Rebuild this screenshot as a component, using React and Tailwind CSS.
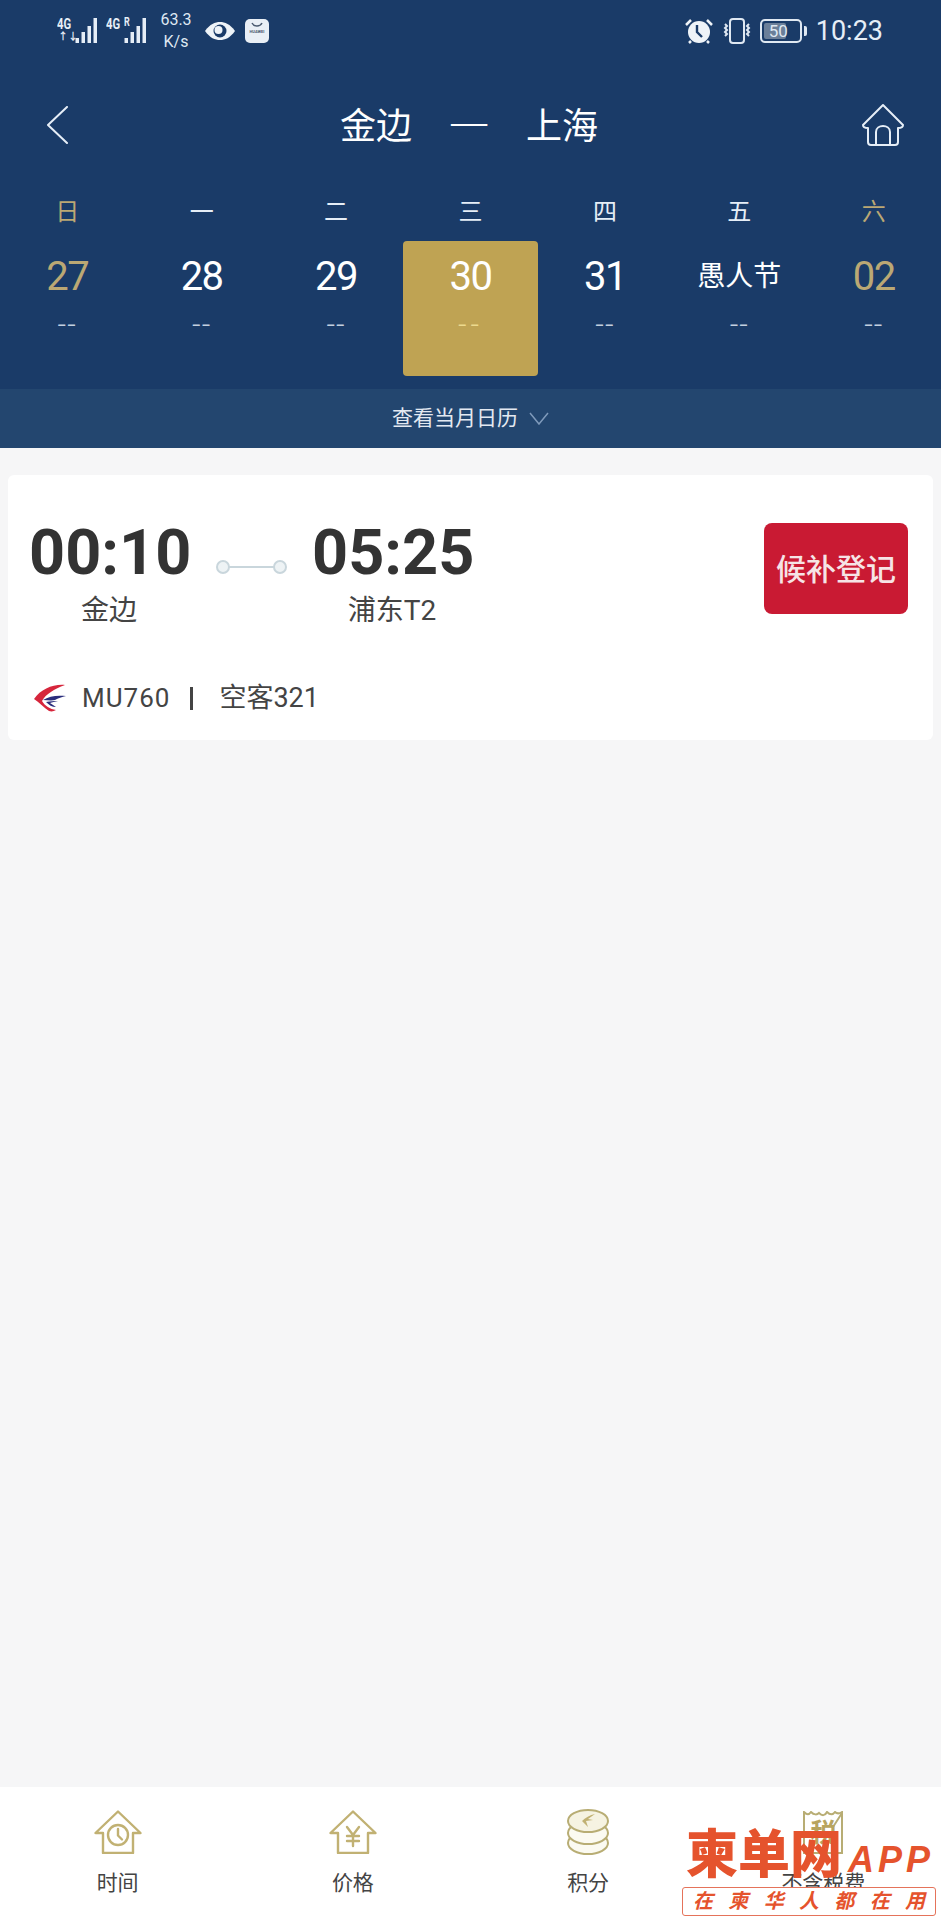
const CJK = { fontFamily: 'Roboto, "Noto Sans CJK SC", sans-serif' };

const days = [
  { w: '日', d: '27', gold: true },
  { w: '一', d: '28' },
  { w: '二', d: '29' },
  { w: '三', d: '30', sel: true },
  { w: '四', d: '31' },
  { w: '五', d: '愚人节', text: true },
  { w: '六', d: '02', gold: true },
];

function Signal({ label, r, arrows }) {
  const bars = [
    { x: 20, h: 5 },
    { x: 26, h: 11 },
    { x: 32, h: 17 },
    { x: 38, h: 25 },
  ];
  return (
    <div className="relative h-[25px] w-[41px] shrink-0">
      <span className="absolute left-0 top-[-2px] origin-left scale-x-75 text-[15px] font-bold leading-[16px] text-[#e6eef7]">{label}</span>
      {r && <span className="absolute left-[18px] top-[-3px] origin-left scale-x-75 text-[12px] font-bold leading-[14px] text-[#e6eef7]">R</span>}
      {arrows && <span className="absolute left-[1px] top-[13px] text-[10px] font-bold leading-[12px] text-[#e6eef7]">↑↓</span>}
      <svg className="absolute left-0 top-0" width="41" height="25" viewBox="0 0 41 25">
        {bars.map((b) => (
          <rect key={b.x} x={b.x - 1.5} y={25 - b.h} width="3.5" height={b.h} fill="#e6eef7" />
        ))}
      </svg>
    </div>
  );
}

function Logo() {
  return (
    <svg width="34" height="28" viewBox="0 0 34 28" className="shrink-0">
      <path d="M32 1C20 0 8 5 1 15c5 3 10 9 15 12 3 1 5 0 7-1-6-1-11-4-14-9C13 10 21 5 32 1Z" fill="#d6263c" />
      <path d="M33 12c-9-1-17 0-23 4 4 0 8 1 12 0 3-2 7-3 11-4Z" fill="#2a2d7c" />
      <path d="M13 18c4-1 8-1 12-1-3 1-6 1-8 2l6 4c-4 0-7-2-10-5Z" fill="#2a2d7c" />
    </svg>
  );
}

function HouseBase({ children }) {
  return (
    <svg width="48" height="44" viewBox="0 0 48 44" fill="none" stroke="#c1b173" strokeWidth="2.4" strokeLinejoin="round" strokeLinecap="round">
      <path d="M24 1.5 1.5 23h7.5v20h30V23h7.5Z" />
      {children}
    </svg>
  );
}

const tabs = [
  {
    t: '时间',
    icon: (
      <HouseBase>
        <circle cx="24" cy="25" r="10" />
        <path d="M24 19v6.5l4 4" />
      </HouseBase>
    ),
  },
  {
    t: '价格',
    icon: (
      <HouseBase>
        <path d="m18 17 6 8 6-8M24 25v11M18 26h12M18 31h12" />
      </HouseBase>
    ),
  },
  {
    t: '积分',
    icon: (
      <svg width="44" height="46" viewBox="0 0 44 46" fill="none" stroke="#b8ad74" strokeWidth="2">
        <ellipse cx="22" cy="34" rx="20" ry="11" fill="#fbfaf1" />
        <ellipse cx="22" cy="24" rx="20" ry="11" fill="#fbfaf1" />
        <ellipse cx="22" cy="12" rx="20" ry="11" fill="#f6f3e2" />
        <path d="M29 5c-5 1-10 4-13 7l6 6-2-6 7-1-5-1Z" fill="#c1b173" stroke="none" />
      </svg>
    ),
  },
  {
    t: '不含税费',
    icon: (
      <div className="relative h-[43px] w-[40px]">
        <svg width="40" height="43" viewBox="0 0 40 43" fill="none" stroke="#b8ad74" strokeWidth="2" className="absolute left-0 top-0">
          <path d="M1 1c3 3 5 3 7 0 3 3 6 3 8 1 3 3 6 3 8-1 3 3 6 3 8 0 2 2 4 2 7 0v41H1Z" />
          <path d="m39 2-9 14" />
        </svg>
        <span className="absolute left-[7px] top-[7px] text-[26px] font-bold leading-[30px] text-[#b8a45e]">税</span>
      </div>
    ),
  },
];

export default function App() {
  return (
    <div className="relative flex h-[1920px] w-[941px] flex-col overflow-hidden bg-[#f6f6f7]" style={CJK}>
      <header className="flex h-[448px] shrink-0 flex-col bg-[#1a3b68] text-white">
        {/* status bar */}
        <div className="flex h-[60px] items-center pl-[57px] pr-[58px] pt-[1px]">
          <Signal label="4G" arrows />
          <div className="ml-[8px]"><Signal label="4G" r /></div>
          <div className="ml-[11px] w-[36px] text-center text-[16px] leading-[22px] text-[#dfe8f2]">
            <div>63.3</div>
            <div>K/s</div>
          </div>
          <svg className="ml-[10px]" width="32" height="20" viewBox="0 0 32 20">
            <path d="M1 10C6 3 11 1 16 1s10 2 15 9c-5 7-10 9-15 9S6 17 1 10Z" fill="#eef3f8" />
            <circle cx="16" cy="10" r="6.5" fill="#1a3b68" />
            <circle cx="14.5" cy="9" r="4" fill="#eef3f8" />
          </svg>
          <div className="ml-[9px] flex h-[24px] w-[24px] flex-col items-center rounded-[5px] bg-[#e9eff6]">
            <svg width="12" height="6" viewBox="0 0 12 6" className="mt-[3px]">
              <path d="M1 1c2 4 8 4 10 0" fill="none" stroke="#4a5a70" strokeWidth="1.5" />
            </svg>
            <span className="mt-[1px] text-[4px] font-bold leading-[6px] text-[#4a5a70]">HUAWEI</span>
          </div>
          <svg className="ml-auto" width="28" height="26" viewBox="0 0 28 26">
            <circle cx="14" cy="14" r="11" fill="#eef3f8" />
            <path d="M12 7v7l5 5" fill="none" stroke="#1a3b68" strokeWidth="2.4" />
            <path d="M1 7 6 2M27 7l-5-5M6 23l-2 2M22 23l2 2" stroke="#eef3f8" strokeWidth="2.5" />
          </svg>
          <svg className="ml-[8px]" width="32" height="26" viewBox="0 0 32 26" fill="none" stroke="#dfe8f2">
            <rect x="9" y="1" width="14" height="24" rx="3" strokeWidth="2" />
            <path d="m4 6 2 2-2 2 2 2-2 2 2 2-2 2M28 6l-2 2 2 2-2 2 2 2-2 2 2 2" strokeWidth="2" />
          </svg>
          <div className="relative ml-[7px] flex h-[24px] w-[42px] items-center rounded-[5px] border-2 border-[#dfe8f2] p-[2px]">
            <div className="h-full w-[22px] rounded-[2px] bg-[#6b7f99]" />
            <span className="absolute left-[7px] top-[-1px] text-[17px] leading-[22px] text-[#dfe8f2]">50</span>
          </div>
          <div className="ml-[2px] mr-[9px] h-[10px] w-[3px] rounded-r-[2px] bg-[#dfe8f2]" />
          <div className="text-[27px] leading-[30px] text-[#e6eef7]">10:23</div>
        </div>

        {/* navigation */}
        <div className="mt-[35px] flex h-[60px] items-center pl-[46px] pr-[36px]">
          <svg width="24" height="38" viewBox="0 0 24 38" fill="none" stroke="#e6eef7" strokeWidth="2" strokeLinecap="round" strokeLinejoin="round">
            <path d="M21 1 2 19l19 18" />
          </svg>
          <div className="flex flex-1 items-center justify-center pl-[7px] pt-[3px] text-[36px] leading-[50px] text-white">
            <span>金边</span>
            <span className="mx-[37px] w-[40px] text-center text-[40px] font-light">一</span>
            <span>上海</span>
          </div>
          <svg width="44" height="44" viewBox="0 0 44 44" fill="none" stroke="#e6eef7" strokeWidth="2" strokeLinecap="round" strokeLinejoin="round">
            <path d="M22 2 2 22c0 2 2 3 5 3v14c0 2 1 3 3 3h24c2 0 3-1 3-3V25c3 0 5-1 5-3Z" />
            <path d="M15 41V29c0-8 14-8 14 0v12" />
          </svg>
        </div>

        {/* weekdays */}
        <div className="mt-[42px] grid h-[30px] grid-cols-7 text-center text-[24px] leading-[30px]">
          {days.map((x) => (
            <div key={x.w} className={x.gold ? 'text-[#bba874]' : 'text-[#e6eef7]'}>{x.w}</div>
          ))}
        </div>

        {/* dates */}
        <div className="mt-[14px] grid h-[135px] grid-cols-7 text-center">
          {days.map((x) => (
            <div key={x.d} className={`flex flex-col items-center rounded-[4px] pt-[13px] ${x.sel ? 'bg-[#bfa353]' : ''}`}>
              <div
                className={`flex h-[46px] items-center justify-center ${x.text ? 'text-[28px]' : 'text-[40px] tracking-[-1.5px]'} ${x.gold ? 'text-[#bba874]' : 'text-white'}`}
              >
                {x.d}
              </div>
              <div className={`mt-[13px] h-[24px] text-[30px] font-light leading-[24px] ${x.sel ? 'tracking-[4px] text-[#ecd98e]' : 'tracking-[1px] text-[#c3d0e0]'}`}>--</div>
            </div>
          ))}
        </div>

        {/* month calendar bar */}
        <div className="mt-[13px] flex h-[59px] items-center justify-center gap-[11px] bg-[#23466f] text-[21px] text-[#e3e9f1]">
          <span>查看当月日历</span>
          <svg width="20" height="13" viewBox="0 0 20 13" fill="none" stroke="#7f9abb" strokeWidth="1.5">
            <path d="m1 1 9 11 9-11" />
          </svg>
        </div>
      </header>

      <main className="flex-1 px-[8px] pt-[27px]">
        <div className="flex h-[265px] flex-col rounded-[6px] bg-white pl-[21px] pr-[25px] pt-[47px]">
          <div className="flex items-start">
            <div className="w-[160px] text-center">
              <div className="text-[63px] font-bold leading-[62px] text-[#333]">00:10</div>
              <div className="mt-[13px] text-[28px] leading-[28px] text-[#444]">金边</div>
            </div>
            <svg className="ml-[26px] mt-[37px]" width="73" height="16" viewBox="0 0 73 16" fill="none" stroke="#c9d6dc" strokeWidth="2">
              <path d="M14 8h45" />
              <circle cx="8" cy="8" r="6" fill="#eef3f5" />
              <circle cx="65" cy="8" r="6" fill="#eef3f5" />
            </svg>
            <div className="ml-[24px] w-[160px] text-center">
              <div className="text-[63px] font-bold leading-[62px] text-[#333]">05:25</div>
              <div className="mt-[13px] text-[28px] leading-[28px] text-[#444]">浦东T2</div>
            </div>
            <div className="ml-auto mt-[1px] flex h-[91px] w-[144px] items-center justify-center rounded-[8px] bg-[#c91a33] pt-[2px] text-[30px] font-medium text-[#f6e4e6]">
              候补登记
            </div>
          </div>
          <div className="mb-[27px] mt-auto flex h-[30px] items-center text-[27px] leading-[30px] text-[#444]">
            <div className="ml-[4px]"><Logo /></div>
            <span className="ml-[15px] text-[26px] tracking-[1px]">MU760</span>
            <span className="ml-[20px] h-[23px] w-[3px] bg-[#444]" />
            <span className="ml-[26px]">空客321</span>
          </div>
        </div>
      </main>

      <footer className="grid h-[133px] shrink-0 grid-cols-4 bg-white">
        {tabs.map((x) => (
          <div key={x.t} className="flex flex-col items-center pt-[23px]">
            <div className="flex h-[44px] items-center justify-center">{x.icon}</div>
            <div className="mt-[14px] text-[21px] leading-[30px] text-[#444]">{x.t}</div>
          </div>
        ))}
      </footer>

      {/* watermark overlay */}
      <div className="absolute left-[682px] top-[1828px] w-[254px]">
        <div className="flex h-[56px] items-center">
          <span className="ml-[4px] text-[52px] font-black leading-[56px] text-[#e5532d]">柬单网</span>
          <span className="ml-[6px] mt-[8px] text-[36px] font-bold italic leading-[40px] tracking-[4px] text-[#e5532d]" style={{ fontFamily: '"Liberation Sans", sans-serif' }}>
            APP
          </span>
        </div>
        <div className="mt-[3px] flex h-[29px] items-center justify-between rounded-[3px] border border-[#e5735a] bg-white px-[10px] text-[20px] font-bold italic leading-[27px] text-[#e5532d]">
          {['在', '柬', '华', '人', '都', '在', '用'].map((c, i) => (
            <span key={i}>{c}</span>
          ))}
        </div>
      </div>
    </div>
  );
}
